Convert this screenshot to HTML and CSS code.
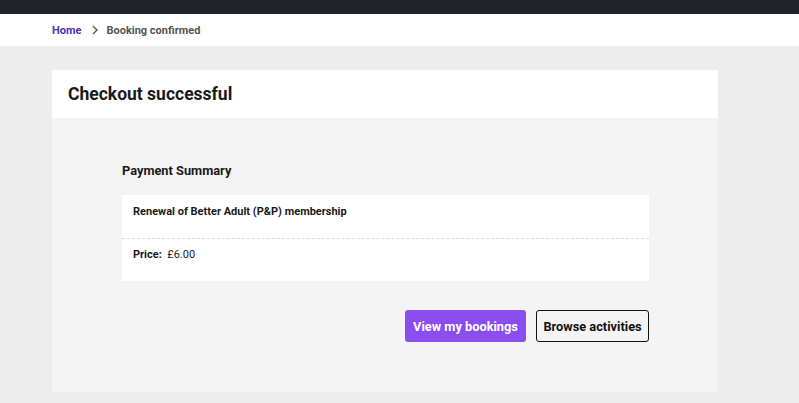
FILE: index.html
```html
<!DOCTYPE html>
<html lang="en">
<head>
    <meta charset="UTF-8">
    <meta name="viewport" content="width=device-width, initial-scale=1.0">
    <title>Booking confirmed</title>
    <link rel="stylesheet" href="styles.css">
</head>
<body>
<div class="topbar"></div>
<nav class="crumbs">
    <a class="crumb-home" href="#">Home</a>
    <svg class="crumb-sep" width="8" height="10" viewBox="0 0 8 10"><path d="M2 1l4 4-4 4" fill="none" stroke="#555" stroke-width="1.4"/></svg>
    <span class="crumb-current">Booking confirmed</span>
</nav>

<div class="page">
    <div class="card">
        <div class="card-head">Checkout successful</div>
        <div class="card-body">
            <h3 class="summary-title">Payment Summary</h3>
            <div class="summary">
                <div class="summary-row row-name">Renewal of Better Adult (P&amp;P) membership</div>
                <div class="summary-row row-price"><b>Price:</b>&nbsp; £6.00</div>
            </div>
            <div class="actions">
                <button class="btn btn-primary">View my bookings</button>
                <button class="btn btn-outline">Browse activities</button>
            </div>
        </div>
    </div>
</div>
</body>
</html>
```

FILE: styles.css
```css
body {
    margin: 0;
    background-color: #ededed;
    font-family: Roboto, "Liberation Sans", sans-serif;
    color: #1a1a1a;
}

.topbar {
    height: 14px;
    background-color: #22222b;
}

.crumbs {
    height: 32px;
    background-color: #fff;
    display: flex;
    align-items: center;
    padding-left: 52px;
    font-size: 11px;
    font-weight: 700;
}

.crumb-home {
    color: #4a33b3;
    text-decoration: none;
}

.crumb-sep {
    margin: 0 7px 0 10px;
}

.crumb-current {
    color: #555;
}

.page {
    padding: 24px 0 11px 52px;
}

.card {
    width: 666px;
}

.card-head {
    height: 48px;
    background-color: #fff;
    display: flex;
    align-items: center;
    padding-left: 16px;
    font-size: 17.5px;
    font-weight: 700;
}

.card-body {
    background-color: #f4f4f4;
    height: 274px;
    box-sizing: border-box;
    padding: 45px 69px 0 70px;
}

.summary-title {
    margin: 0 0 16px;
    font-size: 12.8px;
    line-height: 16px;
    font-weight: 700;
}

.summary {
    background-color: #fff;
    font-size: 11px;
}

.summary-row {
    box-sizing: border-box;
    padding: 0 11px;
    line-height: 14px;
}

.row-name {
    height: 44px;
    padding-top: 10px;
    font-weight: 700;
    border-bottom: 1px dashed #ddd;
}

.row-price {
    height: 42px;
    padding-top: 9px;
}

.actions {
    display: flex;
    justify-content: flex-end;
    gap: 10px;
    margin-top: 29px;
}

.btn {
    height: 32px;
    border-radius: 3px;
    font-family: Roboto, "Liberation Sans", sans-serif;
    font-size: 12.8px;
    font-weight: 700;
    padding: 0 6px;
    cursor: pointer;
}

.btn-primary {
    background-color: #8a4ef0;
    color: #fff;
    border: 0;
    width: 121px;
}

.btn-outline {
    background-color: transparent;
    color: #111;
    border: 1px solid #111;
    width: 113px;
}
```
